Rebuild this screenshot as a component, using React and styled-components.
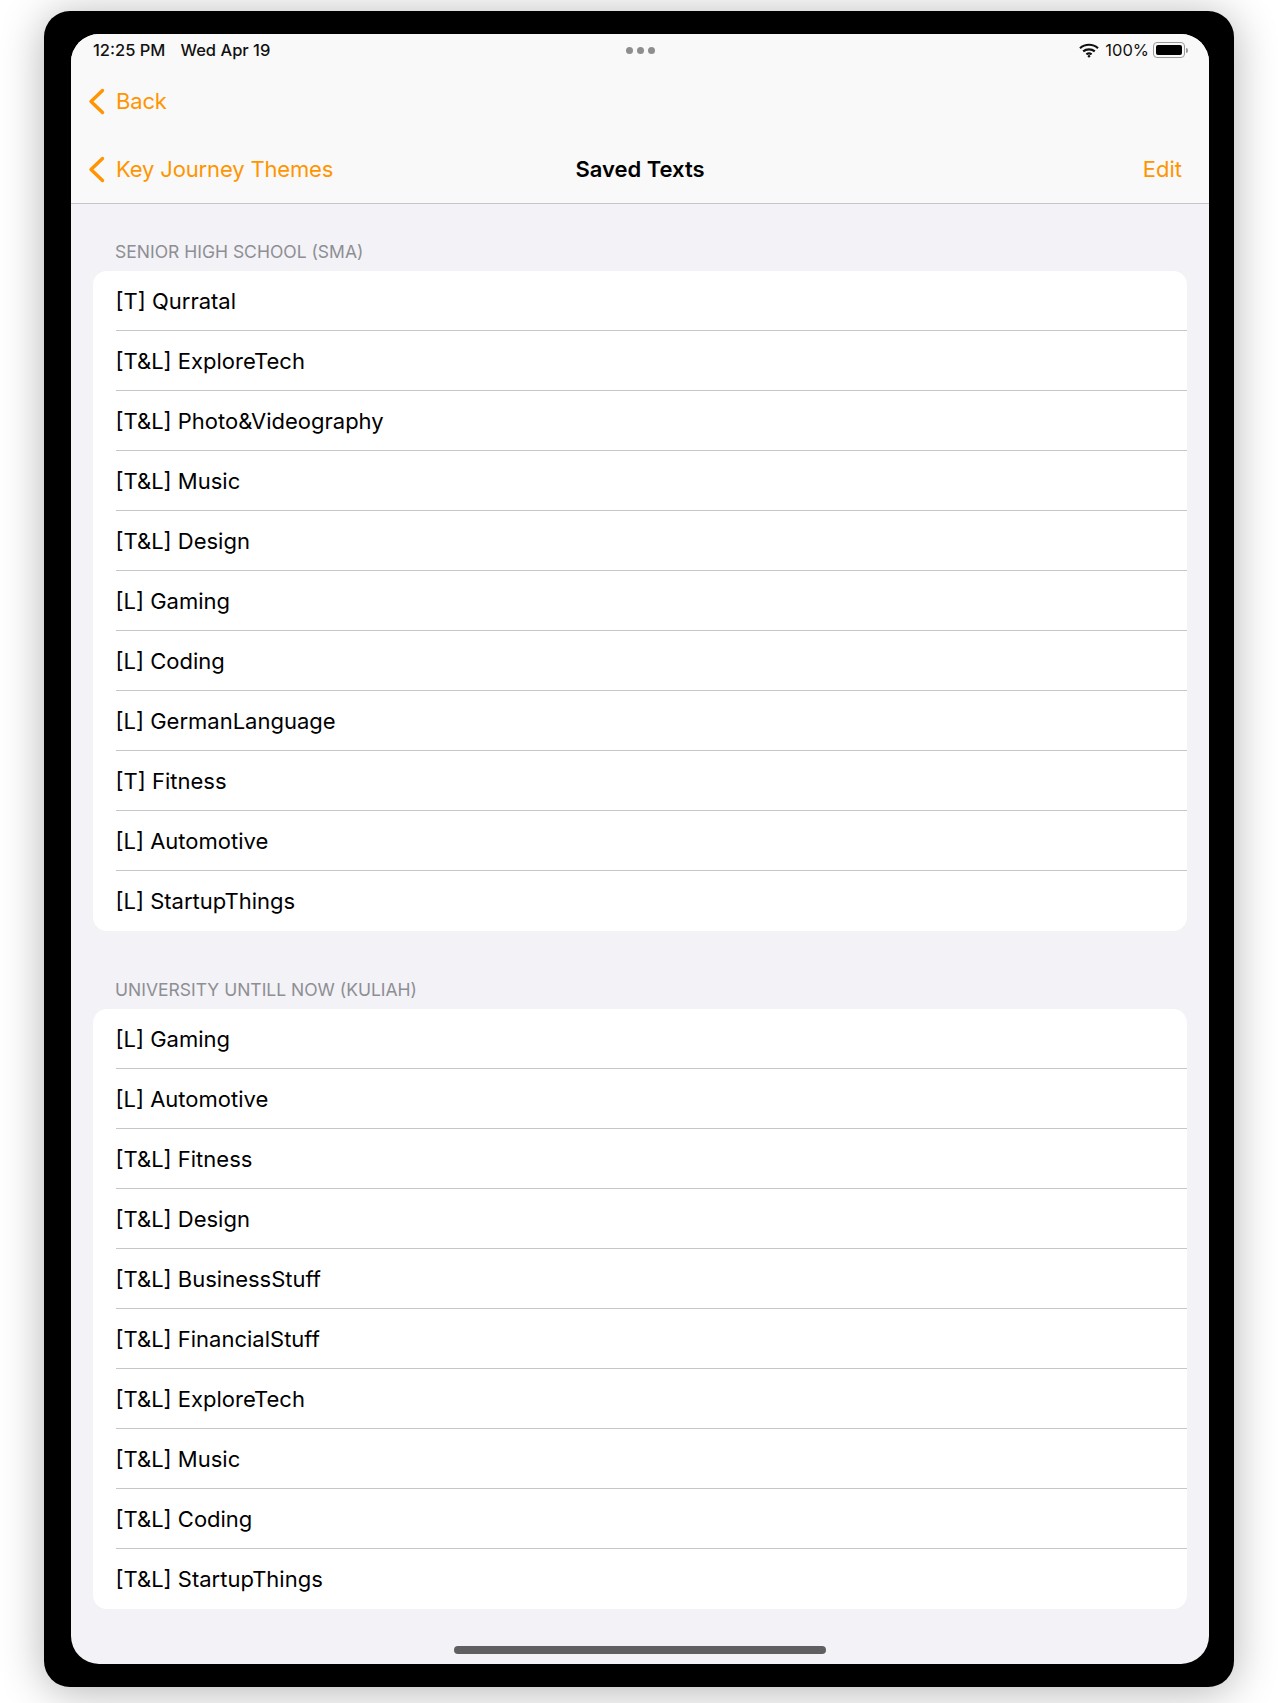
import styled, { createGlobalStyle } from "styled-components";

const ORANGE = "#ff9500";

const firstSection = [
  "[T] Qurratal",
  "[T&L] ExploreTech",
  "[T&L] Photo&Videography",
  "[T&L] Music",
  "[T&L] Design",
  "[L] Gaming",
  "[L] Coding",
  "[L] GermanLanguage",
  "[T] Fitness",
  "[L] Automotive",
  "[L] StartupThings",
];

const secondSection = [
  "[L] Gaming",
  "[L] Automotive",
  "[T&L] Fitness",
  "[T&L] Design",
  "[T&L] BusinessStuff",
  "[T&L] FinancialStuff",
  "[T&L] ExploreTech",
  "[T&L] Music",
  "[T&L] Coding",
  "[T&L] StartupThings",
];

const sections = [
  { title: "SENIOR HIGH SCHOOL (SMA)", items: firstSection },
  { title: "UNIVERSITY UNTILL NOW (KULIAH)", items: secondSection },
];

function Chevron() {
  return (
    <ChevronIcon width="17" height="27" viewBox="0 0 17 27" fill="none">
      <path d="M14.5 2.5 L3 13.5 L14.5 24.5" stroke={ORANGE} strokeWidth="3.4" strokeLinecap="round" strokeLinejoin="round" />
    </ChevronIcon>
  );
}

function Wifi() {
  return (
    <WifiIcon width="20" height="15" viewBox="0 0 20 15" fill="none" stroke="#111" strokeWidth="2.2">
      <path d="M1 5.2 C6 0.6 14 0.6 19 5.2" />
      <path d="M4.2 8.4 C7.4 5.6 12.6 5.6 15.8 8.4" />
      <path d="M7.4 11.3 C8.9 10.2 11.1 10.2 12.6 11.3" />
      <circle cx="10" cy="13.2" r="1.2" fill="#111" stroke="none" />
    </WifiIcon>
  );
}

function App() {
  return (
    <>
      <GlobalStyle />
      <Page>
        <Device>
          <Screen>
            <TopBars>
              <StatusBar>
                <StatusLeft>
                  <span>12:25 PM</span>
                  <span>Wed Apr 19</span>
                </StatusLeft>
                <Dots>
                  <Dot />
                  <Dot />
                  <Dot />
                </Dots>
                <StatusRight>
                  <Wifi />
                  <span>100%</span>
                  <Battery>
                    <BatteryFill />
                  </Battery>
                  <BatteryTip />
                </StatusRight>
              </StatusBar>
              <BackRow>
                <NavLink>
                  <Chevron />
                  Back
                </NavLink>
              </BackRow>
              <NavRow>
                <NavLink>
                  <Chevron />
                  Key Journey Themes
                </NavLink>
                <Title>Saved Texts</Title>
                <EditLink>Edit</EditLink>
              </NavRow>
            </TopBars>
            <Content>
              {sections.map((section) => (
                <Section key={section.title}>
                  <SectionTitle>{section.title}</SectionTitle>
                  <Card>
                    {section.items.map((item, i) => (
                      <Row key={i}>
                        <RowText $last={i === section.items.length - 1}>{item}</RowText>
                      </Row>
                    ))}
                  </Card>
                </Section>
              ))}
            </Content>
            <HomeBarWrap>
              <HomeBar />
            </HomeBarWrap>
          </Screen>
        </Device>
      </Page>
    </>
  );
}

export default App;

const GlobalStyle = createGlobalStyle`
  html, body {
    margin: 0;
    padding: 0;
    background: #fff;
  }
  * {
    box-sizing: border-box;
  }
`;

const Page = styled.div`
  width: 1278px;
  height: 1703px;
  padding: 11px 44px 16px;
  overflow: hidden;
  font-family: Inter, "Liberation Sans", sans-serif;
`;

const Device = styled.div`
  height: 1676px;
  padding: 23px 25px 23px 27px;
  background: #000;
  border-radius: 26px;
  box-shadow: 0 4px 44px rgba(0, 0, 0, 0.3);
`;

const Screen = styled.div`
  height: 100%;
  display: flex;
  flex-direction: column;
  background: #f2f2f7;
  border-radius: 28px;
  overflow: hidden;
`;

const TopBars = styled.header`
  height: 170px;
  flex-shrink: 0;
  background: #f9f9f9;
  border-bottom: 1px solid #c6c6c8;
`;

const StatusBar = styled.div`
  height: 32px;
  padding: 0 21px 0 22px;
  display: grid;
  grid-template-columns: 1fr auto 1fr;
  align-items: center;
  font-size: 16.5px;
  font-weight: 500;
  color: #111;
`;

const StatusLeft = styled.div`
  display: flex;
  gap: 15px;
`;

const Dots = styled.div`
  display: flex;
  gap: 4px;
`;

const Dot = styled.span`
  width: 7px;
  height: 7px;
  border-radius: 50%;
  background: #8e8e8e;
`;

const StatusRight = styled.div`
  display: flex;
  align-items: center;
  justify-content: flex-end;
  font-weight: 400;
`;

const WifiIcon = styled.svg`
  margin-right: 6px;
`;

const Battery = styled.span`
  width: 32px;
  height: 16px;
  margin-left: 4px;
  padding: 2px;
  border: 1px solid #9a9a9a;
  border-radius: 4px;
`;

const BatteryFill = styled.span`
  display: block;
  height: 100%;
  background: #000;
  border-radius: 2px;
`;

const BatteryTip = styled.span`
  width: 2px;
  height: 5px;
  margin-left: 1px;
  background: #9a9a9a;
  border-radius: 0 2px 2px 0;
`;

const BackRow = styled.div`
  height: 70px;
  padding-left: 22px;
  display: flex;
  align-items: center;
`;

const NavRow = styled.div`
  height: 66px;
  padding: 0 22px;
  display: grid;
  grid-template-columns: 1fr auto 1fr;
  align-items: center;
`;

const NavLink = styled.a`
  display: flex;
  align-items: center;
  gap: 11px;
  font-size: 22px;
  letter-spacing: -0.15px;
  color: ${ORANGE};
`;

const ChevronIcon = styled.svg`
  margin-left: -5px;
`;

const Title = styled.div`
  font-size: 22px;
  font-weight: 600;
  color: #000;
`;

const EditLink = styled.a`
  justify-self: end;
  margin-right: 5px;
  font-size: 22px;
  color: ${ORANGE};
`;

const Content = styled.main`
  flex: 1;
  padding: 0 22px;
`;

const Section = styled.section`
  & + & {
    margin-top: 11px;
  }
`;

const SectionTitle = styled.div`
  height: 67px;
  padding: 0 0 9px 22px;
  display: flex;
  align-items: flex-end;
  font-size: 17.5px;
  color: #8e8e93;
`;

const Card = styled.div`
  background: #fff;
  border-radius: 14px;
  overflow: hidden;
`;

const Row = styled.div`
  height: 60px;
  padding-left: 22.5px;
`;

const RowText = styled.div`
  height: 100%;
  display: flex;
  align-items: center;
  font-size: 22px;
  color: #000;
  border-bottom: ${(p) => (p.$last ? "none" : "1px solid #c6c6c8")};
`;

const HomeBarWrap = styled.div`
  height: 55px;
  display: flex;
  justify-content: center;
  align-items: flex-end;
  padding-bottom: 10px;
`;

const HomeBar = styled.div`
  width: 372px;
  height: 8px;
  background: #5f5f62;
  border-radius: 4px;
`;
